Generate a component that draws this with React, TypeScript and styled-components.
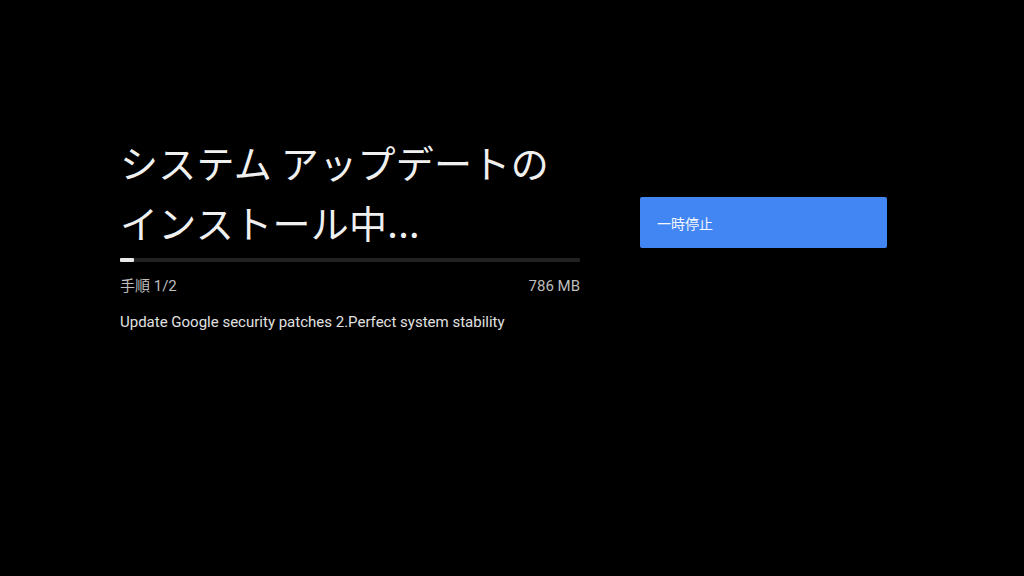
import styled, { createGlobalStyle } from "styled-components";

const GlobalStyle = createGlobalStyle`
  html, body {
    margin: 0;
    padding: 0;
    background: #000;
  }
  body {
    font-family: Roboto, "Noto Sans CJK JP", sans-serif;
    color: #fff;
  }
`;

const Screen = styled.div`
  width: 1024px;
  height: 576px;
  background: #000;
  overflow: hidden;
  display: flex;
  gap: 60px;
  padding: 132px 0 0 120px;
  box-sizing: border-box;
  align-items: flex-start;
`;

const Main = styled.div`
  width: 460px;
  display: flex;
  flex-direction: column;
`;

const Title = styled.h1`
  margin: 0;
  font-family: "Noto Sans CJK JP", sans-serif;
  font-weight: 400;
  font-size: 38px;
  line-height: 60px;
  letter-spacing: 0.3px;
  color: #f0f0f0;
`;

const Track = styled.div`
  margin-top: 6px;
  height: 4px;
  background: #222;
  border-radius: 1px;
`;

const Fill = styled.div`
  height: 100%;
  background: #e8e8e8;
  border-radius: 1px;
`;

const Meta = styled.div`
  margin-top: 14px;
  display: flex;
  justify-content: space-between;
  font-size: 15px;
  line-height: 20px;
  color: #bdbdbd;
`;

const Description = styled.p`
  margin: 16px 0 0;
  font-size: 15px;
  line-height: 20px;
  color: #e0e0e0;
  white-space: nowrap;
`;

const PauseButton = styled.button`
  margin-top: 65px;
  width: 247px;
  height: 51px;
  border: none;
  border-radius: 2px;
  background: #4286f4;
  color: #f4f7fd;
  font-family: "Noto Sans CJK JP", sans-serif;
  font-size: 14px;
  text-align: left;
  padding: 0 0 0 17px;
`;

export default function App() {
  const progress = 3;
  return (
    <>
      <GlobalStyle />
      <Screen>
        <Main>
          <Title>
            システム アップデートの
            <br />
            インストール中...
          </Title>
          <Track>
            <Fill style={{ width: `${progress}%` }} />
          </Track>
          <Meta>
            <span>手順 1/2</span>
            <span>786 MB</span>
          </Meta>
          <Description>
            Update Google security patches 2.Perfect system stability
          </Description>
        </Main>
        <PauseButton>一時停止</PauseButton>
      </Screen>
    </>
  );
}
